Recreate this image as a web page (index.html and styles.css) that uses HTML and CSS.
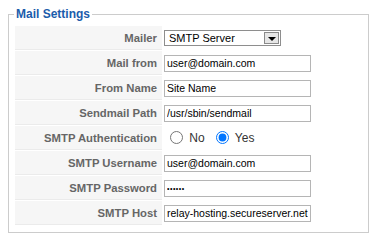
FILE: index.html
```html
<!DOCTYPE html>
<html lang="en">
<head>
    <meta charset="UTF-8">
    <title>Mail Settings</title>
    <link rel="stylesheet" href="styles.css">
</head>
<body>

<!-- Configuração do correio -->
<fieldset class="adminform">
    <legend>Mail Settings</legend>
    <table class="admintable">
        <tr>
            <td class="key">Mailer</td>
            <td>
                <span class="select-box">
                    <select>
                        <option>SMTP Server</option>
                        <option>PHP Mail Function</option>
                        <option>Sendmail</option>
                    </select>
                    <span class="select-btn"><span class="tri"></span></span>
                </span>
            </td>
        </tr>
        <tr>
            <td class="key">Mail from</td>
            <td><input type="text" class="text-box" value="user@domain.com"></td>
        </tr>
        <tr>
            <td class="key">From Name</td>
            <td><input type="text" class="text-box" value="Site Name"></td>
        </tr>
        <tr>
            <td class="key">Sendmail Path</td>
            <td><input type="text" class="text-box" value="/usr/sbin/sendmail"></td>
        </tr>
        <tr>
            <td class="key">SMTP Authentication</td>
            <td class="radios">
                <label><input type="radio" name="smtpauth"> No</label>
                <label><input type="radio" name="smtpauth" checked> Yes</label>
            </td>
        </tr>
        <tr>
            <td class="key">SMTP Username</td>
            <td><input type="text" class="text-box" value="user@domain.com"></td>
        </tr>
        <tr>
            <td class="key">SMTP Password</td>
            <td><input type="password" class="text-box pass" value="secret"></td>
        </tr>
        <tr>
            <td class="key">SMTP Host</td>
            <td><input type="text" class="text-box" value="relay-hosting.secureserver.net"></td>
        </tr>
    </table>
</fieldset>

</body>
</html>
```

FILE: styles.css
```css
/* Página */
body {
    margin: 0;
    padding: 7px 0 0 8px;
    background: #ffffff;
    font-family: "Liberation Sans", Arial, sans-serif;
    color: #333333;
}

/* Caixa com legenda */
.adminform {
    width: 347px;
    margin: 0;
    padding: 0 6px 6px 6px;
    border: 1px solid #cccccc;
}

.adminform legend {
    padding: 0 2px;
    margin-left: -1px;
    font-size: 12px;
    font-weight: bold;
    color: #1b5cab;
}

.admintable {
    width: 100%;
    border-collapse: separate;
    border-spacing: 0 1px;
    margin-top: 4px;
}

.admintable td {
    height: 23px;
    padding: 0;
    font-size: 11px;
}

.admintable td.key {
    width: 142px;
    padding-right: 5px;
    text-align: right;
    font-size: 11.3px;
    font-weight: bold;
    color: #666666;
    background-color: #f6f6f6;
    border-bottom: 1px solid #ebebeb;
}

.admintable td + td {
    padding-left: 2px;
}

/* Campos de texto */
.text-box {
    width: 147px;
    height: 17px;
    box-sizing: border-box;
    padding: 1px 2px;
    border: 1px solid #b5b5b5;
    font-family: "Liberation Sans", Arial, sans-serif;
    font-size: 10.5px;
    color: #000000;
    vertical-align: middle;
}

.pass {
    font-size: 7px;
    letter-spacing: 0.5px;
}

/* Lista de seleção */
.select-box {
    display: inline-flex;
    width: 117px;
    height: 16px;
    box-sizing: border-box;
    border: 1px solid #8e8e8e;
    background: #ffffff;
    vertical-align: middle;
}

.select-box select {
    flex: 1;
    min-width: 0;
    appearance: none;
    border: none;
    outline: none;
    padding: 0 0 0 4px;
    background: transparent;
    font-family: "Liberation Sans", Arial, sans-serif;
    font-size: 11px;
    color: #000000;
}

.select-btn {
    display: flex;
    align-items: center;
    justify-content: center;
    width: 15px;
    margin: 1px;
    box-sizing: border-box;
    border: 1px solid #8a8a8a;
    background: #e6e6e6;
}

.tri {
    width: 0;
    height: 0;
    margin-top: 2px;
    border-left: 4px solid transparent;
    border-right: 4px solid transparent;
    border-top: 4px solid #000000;
}

/* Botões de rádio */
.radios label {
    font-size: 12px;
    color: #333333;
    margin-right: 2px;
}

.radios input {
    width: 13px;
    height: 13px;
    margin: 0 3px 0 6px;
    vertical-align: -2px;
}
```
